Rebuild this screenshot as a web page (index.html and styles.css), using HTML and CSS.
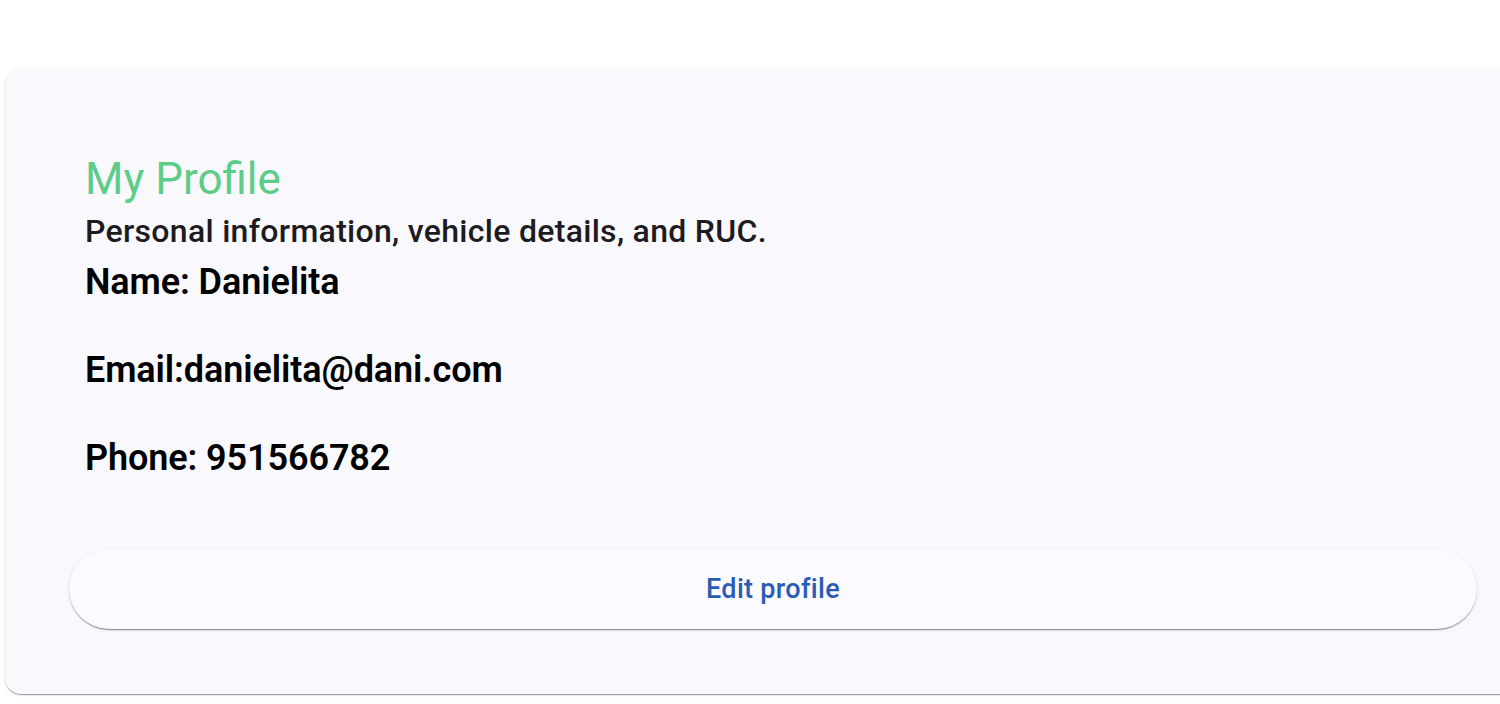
FILE: index.html
```html
<!DOCTYPE html>
<html lang="en">
<head>
<meta charset="utf-8">
<title>My Profile</title>
<link rel="stylesheet" href="styles.css">
</head>
<body>
<main class="page">
  <section class="card">
    <div class="info">
      <h1 class="title">My Profile</h1>
      <p class="subtitle">Personal information, vehicle details, and RUC.</p>
      <h2 class="field">Name: Danielita</h2>
      <h2 class="field">Email:danielita@dani.com</h2>
      <h2 class="field">Phone: 951566782</h2>
    </div>
    <button class="edit-btn" type="button">Edit profile</button>
  </section>
</main>
</body>
</html>
```

FILE: styles.css
```css
html, body {
  margin: 0;
  padding: 0;
  background: #ffffff;
  overflow: hidden;
}
body {
  font-family: Roboto, "Liberation Sans", Arial, sans-serif;
  width: 1500px;
  height: 704px;
}
.page {
  padding: 68px 0 0 5px;
}
.card {
  box-sizing: border-box;
  width: 1536px;
  background: #f9f8fd;
  border-radius: 16px;
  box-shadow: 0 2px 1px -1px rgba(0,0,0,0.22), 0 1px 1px 0 rgba(0,0,0,0.14), 0 1px 3px 0 rgba(0,0,0,0.12);
  padding: 86px 64px 65px 64px;
  display: flex;
  flex-direction: column;
}
.info {
  padding-left: 16px;
}
.title {
  margin: 0;
  font-weight: 400;
  font-size: 44px;
  line-height: 50px;
  color: #5ccd89;
}
.subtitle {
  margin: 0;
  font-weight: 500;
  font-size: 32px;
  line-height: 54px;
  letter-spacing: 0.3px;
  color: #1d1b20;
}
.field {
  margin: 46px 0 0 0;
  font-weight: 600;
  font-size: 36px;
  line-height: 42px;
  letter-spacing: -0.1px;
  color: #000000;
}
.subtitle + .field {
  margin-top: 3px;
}
.edit-btn {
  margin-top: 70px;
  height: 80px;
  width: 100%;
  border: none;
  border-radius: 40px;
  background: #fbfafe;
  box-shadow: 0 2px 1px -1px rgba(0,0,0,0.28), 0 1px 1px 0 rgba(0,0,0,0.16), 0 1px 3px 0 rgba(0,0,0,0.12);
  font-family: Roboto, "Liberation Sans", Arial, sans-serif;
  font-weight: 500;
  font-size: 27px;
  letter-spacing: 0.3px;
  color: #2a5cb6;
  cursor: pointer;
}
```
